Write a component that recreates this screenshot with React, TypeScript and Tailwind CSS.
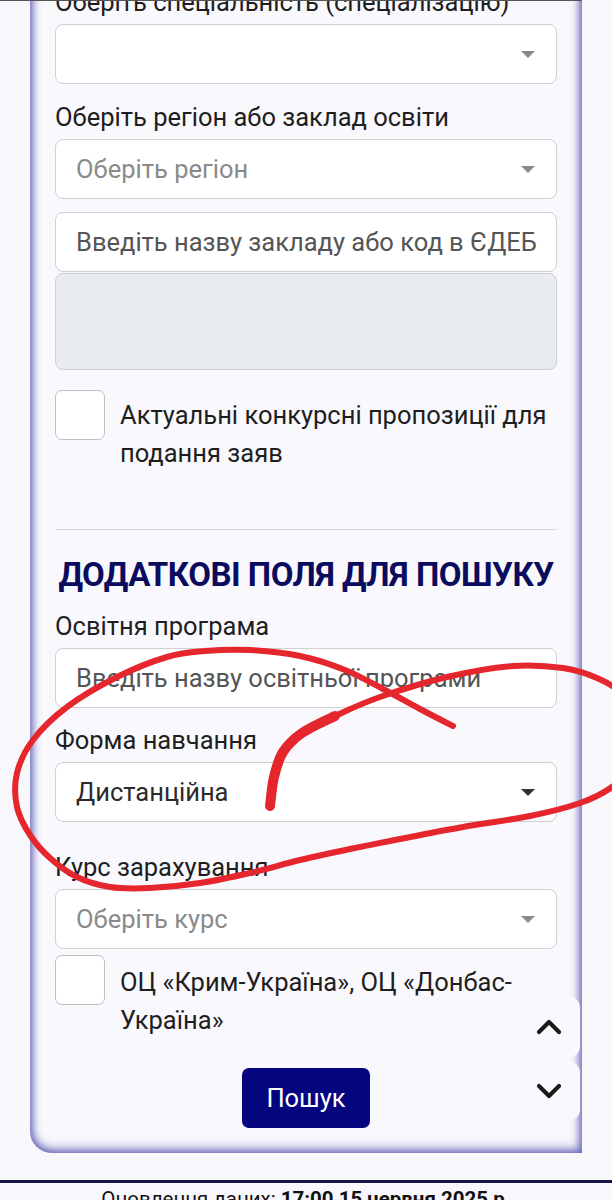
import { ChevronDown, ChevronUp } from 'lucide-react'

type Pt = [number, number]

// catmull-rom -> cubic bezier, for the hand drawn red loop
function smooth(pts: Pt[]) {
  let d = `M${pts[0][0]} ${pts[0][1]}`
  for (let i = 0; i < pts.length - 1; i++) {
    const p0 = pts[i - 1] || pts[i]
    const p1 = pts[i]
    const p2 = pts[i + 1]
    const p3 = pts[i + 2] || p2
    const c1x = p1[0] + (p2[0] - p0[0]) / 6
    const c1y = p1[1] + (p2[1] - p0[1]) / 6
    const c2x = p2[0] - (p3[0] - p1[0]) / 6
    const c2y = p2[1] - (p3[1] - p1[1]) / 6
    d += ` C${c1x.toFixed(1)} ${c1y.toFixed(1)} ${c2x.toFixed(1)} ${c2y.toFixed(1)} ${p2[0]} ${p2[1]}`
  }
  return d
}

const loop: Pt[] = [
  [453, 726], [420, 709], [385, 690], [345, 670], [300, 656], [250, 650], [205, 651], [167, 657],
  [117, 677], [67, 707], [33, 740], [17, 773], [17, 807], [30, 835], [50, 858], [77, 877],
  [110, 887], [150, 888], [200, 883], [250, 873], [300, 860], [350, 849], [400, 839], [463, 827],
  [530, 816], [580, 803], [612, 787], [640, 760], [645, 720], [625, 695], [597, 678], [563, 668],
  [513, 666], [447, 677], [380, 697], [335, 716], [302, 733],
]
const hook: Pt[] = [[335, 716], [302, 733], [283, 752], [274, 777], [270, 806]]

function Caret({ dark }: { dark?: boolean }) {
  return (
    <span
      className={
        dark
          ? 'h-0 w-0 border-x-[7px] border-t-[7px] border-x-transparent border-t-[#333]'
          : 'h-0 w-0 border-x-[7px] border-t-[7px] border-x-transparent border-t-[#8a8a8a]'
      }
    />
  )
}

function Select({ text, dark }: { text?: string; dark?: boolean }) {
  return (
    <div className="flex h-[60px] items-center justify-between rounded-[8px] border border-[#cfcfd4] bg-white pl-[20px] pr-[21px]">
      <span className={dark ? 'text-[25.5px] text-[#2b2b2b]' : 'text-[25.5px] text-[#8a8a8a]'}>{text}</span>
      <Caret dark={dark} />
    </div>
  )
}

function Input({ text, className }: { text: string; className?: string }) {
  return (
    <div className={`flex h-[60px] items-center overflow-hidden whitespace-nowrap rounded-[8px] border border-[#cfcfd4] bg-white pl-[20px] ${className ?? ''}`}>
      <span className="text-[25.5px] text-[#555]">{text}</span>
    </div>
  )
}

function Check({ children, textTop }: { children: React.ReactNode; textTop: string }) {
  return (
    <div className="flex items-start gap-[15px]">
      <div className="h-[50px] w-[50px] shrink-0 rounded-[7px] border border-[#bdbdc3] bg-white" />
      <div className={`${textTop} text-[25.5px] leading-[38px] text-[#1e1e1e]`}>{children}</div>
    </div>
  )
}

export default function App() {
  return (
    <div className="relative h-[1200px] overflow-hidden bg-[#f8f8fc] font-['Roboto',sans-serif] text-[#1e1e1e]">
      <div className="absolute left-0 top-0 h-px w-[582px] bg-[#555]" />

      <div className="-mt-[12px] ml-[30px] mr-[30px] rounded-bl-[22px] bg-[#f8f8fd] px-[25px] pb-[25px] shadow-[inset_3px_0_7px_rgba(80,80,175,0.6),inset_-3px_0_7px_rgba(80,80,175,0.6),inset_0_-4px_12px_rgba(80,80,175,0.55)]">
        <div className="mb-[8px] text-[25.5px] leading-[28px]">Оберіть спеціальність (спеціалізацію)</div>
        <Select />

        <div className="mb-[8px] mt-[19px] text-[25.5px] leading-[28px]">Оберіть регіон або заклад освіти</div>
        <Select text="Оберіть регіон" />
        <Input className="mt-[13px]" text="Введіть назву закладу або код в ЄДЕБ" />
        <div className="mt-px h-[97px] rounded-[8px] border border-[#cfcfd4] bg-[#e9ecef]" />

        <div className="mt-[20px]">
          <Check textTop="mt-[6px]">Актуальні конкурсні пропозиції для подання заяв</Check>
        </div>

        <div className="mt-[57px] h-px bg-[#d8d8e0]" />

        <h2 className="mt-[25px] whitespace-nowrap text-center text-[33px] font-bold leading-[40px] tracking-[-0.5px] text-[#0c0c5e]">
          ДОДАТКОВІ ПОЛЯ ДЛЯ ПОШУКУ
        </h2>

        <div className="mb-[8px] mt-[17px] text-[25.5px] leading-[28px]">Освітня програма</div>
        <Input text="Введіть назву освітньої програми" />

        <div className="mb-[8px] mt-[18px] text-[25.5px] leading-[28px]">Форма навчання</div>
        <Select text="Дистанційна" dark />

        <div className="mb-[8px] mt-[31px] text-[25.5px] leading-[28px]">Курс зарахування</div>
        <Select text="Оберіть курс" />

        <div className="mt-[6px]">
          <Check textTop="mt-[8px]">ОЦ «Крим-Україна», ОЦ «Донбас-Україна»</Check>
        </div>

        <div className="mt-[29px] flex justify-center">
          <button className="h-[60px] rounded-[7px] bg-[#05057f] px-[24px] text-[25.5px] text-white">Пошук</button>
        </div>
      </div>

      <div className="mt-[27px] h-[3px] bg-[#15154a]" />
      <div className="pt-[2px] text-center text-[20.5px] leading-[28px] text-[#111]">
        Оновлення даних: <span className="font-bold">17:00 15 червня 2025 р.</span>
      </div>

      <div className="absolute right-[32px] top-[997px] flex flex-col gap-[5px]">
        <button className="flex h-[60px] w-[62px] items-center justify-center rounded-[10px] bg-[#f9f9fd]">
          <ChevronUp size={40} strokeWidth={2.5} className="text-[#1a1a1a]" />
        </button>
        <button className="flex h-[58px] w-[62px] items-center justify-center rounded-[10px] bg-[#f9f9fd]">
          <ChevronDown size={40} strokeWidth={2.5} className="text-[#1a1a1a]" />
        </button>
      </div>

      <svg className="pointer-events-none absolute left-0 top-0" width="612" height="1200" viewBox="0 0 612 1200">
        <path d={smooth(loop)} fill="none" stroke="#e5262c" strokeWidth="6" strokeLinecap="round" strokeLinejoin="round" />
        <path d={smooth(hook)} fill="none" stroke="#e5262c" strokeWidth="10" strokeLinecap="round" strokeLinejoin="round" />
      </svg>
    </div>
  )
}
